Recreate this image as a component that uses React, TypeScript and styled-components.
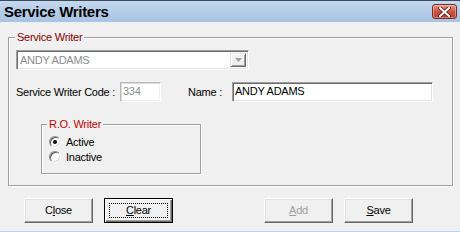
import React from "react";
import styled, { createGlobalStyle } from "styled-components";

const Global = createGlobalStyle`
  html, body { margin: 0; padding: 0; background: #f0f0f0; }
  body { font-family: "Liberation Sans", Arial, sans-serif; font-size: 11px; letter-spacing: -0.25px; color: #000; }
  * { box-sizing: border-box; }
`;

const Window = styled.div`
  width: 460px;
  height: 232px;
  display: flex;
  flex-direction: column;
  background: #f0f0f0;
  border-bottom: 1px solid #b9d1ea;
  overflow: hidden;
`;

const TitleBar = styled.div`
  height: 22px;
  flex: none;
  display: flex;
  align-items: center;
  justify-content: space-between;
  padding: 0 3px 0 4px;
  background: linear-gradient(#c4d8ef, #a8c3e2);
  border-top: 1px solid #3c4a5a;
`;

const Title = styled.span`
  font-family: "Liberation Sans", Arial, sans-serif;
  font-weight: bold;
  font-size: 15px;
  letter-spacing: -0.3px;
  color: #000;
`;

const CloseX = styled.div`
  width: 25px;
  height: 15px;
  border-radius: 3px;
  border: 1px solid #7e2a20;
  background: linear-gradient(#e49a88, #c8503e 55%, #b9412f);
  display: flex;
  align-items: center;
  justify-content: center;
  box-shadow: inset 0 0 0 1px rgba(255, 255, 255, 0.35);
`;

const Group = styled.div<{ $w: number; $h: number; $ml: number; $mt: number }>`
  position: relative;
  width: ${(p) => p.$w}px;
  height: ${(p) => p.$h}px;
  margin-left: ${(p) => p.$ml}px;
  margin-top: ${(p) => p.$mt}px;
  border: 1px solid #a0a0a0;
  box-shadow: 1px 1px 0 #fff, inset 1px 1px 0 #fff;
  display: flex;
  flex-direction: column;
`;

const Caption = styled.span<{ $color: string; $left: number }>`
  position: absolute;
  top: -8px;
  left: ${(p) => p.$left}px;
  padding: 0 2px;
  line-height: 14px;
  background: #f0f0f0;
  color: ${(p) => p.$color};
`;

const Combo = styled.div`
  width: 233px;
  height: 20px;
  margin: 12px 0 0 7px;
  display: flex;
  align-items: stretch;
  background: #fff;
  border: 1px solid;
  border-color: #a0a0a0 #fff #fff #a0a0a0;
  box-shadow: inset 1px 1px 0 #696969, inset -1px -1px 0 #e3e3e3;
  padding: 2px 2px 2px 2px;
`;

const ComboText = styled.span`
  flex: 1;
  color: #8d8d8d;
  line-height: 15px;
  padding-left: 1px;
`;

const ComboArrow = styled.div`
  width: 16px;
  background: #f0f0f0;
  border: 1px solid;
  border-color: #e3e3e3 #696969 #696969 #e3e3e3;
  box-shadow: inset 1px 1px 0 #fff, inset -1px -1px 0 #a0a0a0;
  display: flex;
  align-items: center;
  justify-content: center;
`;

const Row = styled.div`
  display: flex;
  align-items: center;
  margin: 12px 0 0 7px;
`;

const Label = styled.span<{ $w: number; $ml?: number }>`
  width: ${(p) => p.$w}px;
  margin-left: ${(p) => p.$ml ?? 0}px;
  white-space: nowrap;
`;

const TextBox = styled.div<{ $w: number; $disabled?: boolean }>`
  width: ${(p) => p.$w}px;
  height: 20px;
  background: #fff;
  border: 1px solid;
  border-color: ${(p) => (p.$disabled ? "#b9b9b9 #fff #fff #b9b9b9" : "#a0a0a0 #fff #fff #a0a0a0")};
  box-shadow: ${(p) =>
    p.$disabled ? "inset 1px 1px 0 #dcdcdc, inset -1px -1px 0 #f0f0f0" : "inset 1px 1px 0 #696969, inset -1px -1px 0 #e3e3e3"};
  color: ${(p) => (p.$disabled ? "#8d8d8d" : "#000")};
  line-height: 17px;
  padding-left: 2px;
`;

const RadioRow = styled.div`
  display: flex;
  align-items: center;
  height: 15px;
`;

const RadioList = styled.div`
  display: flex;
  flex-direction: column;
  padding: 9px 0 0 7px;
`;

const RadioCircle = styled.span<{ $checked?: boolean }>`
  width: 12px;
  height: 12px;
  border-radius: 50%;
  margin-right: 5px;
  background: #fff;
  border: 1px solid;
  border-color: #8a8a8a #f4f4f4 #f4f4f4 #8a8a8a;
  box-shadow: inset 1px 1px 0 #5c5c5c, inset -1px -1px 0 #dcdcdc;
  display: flex;
  align-items: center;
  justify-content: center;
  &::after {
    content: "";
    width: 4px;
    height: 4px;
    border-radius: 50%;
    background: ${(p) => (p.$checked ? "#000" : "transparent")};
  }
`;

const ButtonRow = styled.div`
  display: flex;
  margin: 12px 0 0 24px;
`;

const Button = styled.div<{ $default?: boolean; $disabled?: boolean; $ml?: number }>`
  width: 69px;
  height: 25px;
  margin-left: ${(p) => p.$ml ?? 0}px;
  background: #f0f0f0;
  display: flex;
  align-items: center;
  justify-content: center;
  color: ${(p) => (p.$disabled ? "#a0a0a0" : "#000")};
  border: 1px solid;
  border-color: ${(p) => (p.$default ? "#000" : "#fff #696969 #696969 #fff")};
  box-shadow: ${(p) =>
    p.$default
      ? "inset 1px 1px 0 #fff, inset -1px -1px 0 #696969, inset -2px -2px 0 #a0a0a0"
      : "inset -1px -1px 0 #a0a0a0, inset 1px 1px 0 #e3e3e3"};
  padding-bottom: 1px;
`;

const Focus = styled.span`
  width: 59px;
  height: 15px;
  border: 1px dotted #000;
  display: flex;
  align-items: center;
  justify-content: center;
`;

const U = styled.span`
  text-decoration: underline;
`;

export default function App() {
  return (
    <>
      <Global />
      <Window>
        <TitleBar>
          <Title>Service Writers</Title>
          <CloseX>
            <svg width="13" height="10" viewBox="0 0 13 10">
              <path d="M2 1 L11 9 M11 1 L2 9" stroke="#5a1a12" strokeWidth="3.6" strokeLinecap="square" />
              <path d="M2 1 L11 9 M11 1 L2 9" stroke="#fff" strokeWidth="2" strokeLinecap="square" />
            </svg>
          </CloseX>
        </TitleBar>
        <Group $w={445} $h={149} $ml={8} $mt={15}>
          <Caption $color="#800000" $left={6}>Service Writer</Caption>
          <Combo>
            <ComboText>ANDY ADAMS</ComboText>
            <ComboArrow>
              <svg width="7" height="4" viewBox="0 0 7 4">
                <path d="M0 0 H7 L3.5 4 Z" fill="#a0a0a0" />
              </svg>
            </ComboArrow>
          </Combo>
          <Row>
            <Label $w={104}>Service Writer Code :</Label>
            <TextBox $w={41} $disabled>334</TextBox>
            <Label $w={44} $ml={27}>Name :</Label>
            <TextBox $w={201}>ANDY ADAMS</TextBox>
          </Row>
          <Group $w={160} $h={50} $ml={32} $mt={22}>
            <Caption $color="#c00000" $left={5}>R.O. Writer</Caption>
            <RadioList>
              <RadioRow>
                <RadioCircle $checked />
                Active
              </RadioRow>
              <RadioRow>
                <RadioCircle />
                Inactive
              </RadioRow>
            </RadioList>
          </Group>
        </Group>
        <ButtonRow>
          <Button>
            <span>C<U>l</U>ose</span>
          </Button>
          <Button $default $ml={11}>
            <Focus>
              <span><U>C</U>lear</span>
            </Focus>
          </Button>
          <Button $disabled $ml={91}>
            <span><U>A</U>dd</span>
          </Button>
          <Button $ml={11}>
            <span><U>S</U>ave</span>
          </Button>
        </ButtonRow>
      </Window>
    </>
  );
}
